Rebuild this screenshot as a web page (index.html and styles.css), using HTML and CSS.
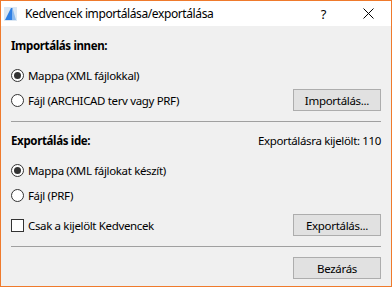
FILE: index.html
```html
<!DOCTYPE html>
<html lang="hu">
<head>
    <meta charset="UTF-8">
    <title>Kedvencek importálása/exportálása</title>
    <link rel="stylesheet" href="styles.css">
</head>
<body>
    <div class="window">
        <!-- Címsor -->
        <div class="titlebar">
            <svg class="app-icon" width="13" height="14" viewBox="0 0 13 14">
                <rect x="0" y="0" width="13" height="14" fill="#dbe7f3"/>
                <path d="M1 13 L7 1 L8.5 1 L8.5 13 Z" fill="#2f80e4"/>
                <path d="M8.5 1 L12 13 L8.5 13 Z" fill="#8dbcef"/>
            </svg>
            <span class="title">Kedvencek importálása/exportálása</span>
            <span class="help">?</span>
            <svg class="close" width="11" height="11" viewBox="0 0 11 11">
                <path d="M0.5 0.5 L10.5 10.5 M10.5 0.5 L0.5 10.5" stroke="#000" stroke-width="1"/>
            </svg>
        </div>

        <div class="content">
            <!-- Import -->
            <div class="heading">Importálás innen:</div>
            <div class="row row-first">
                <label class="option"><span class="radio checked"></span>Mappa (XML fájlokkal)</label>
            </div>
            <div class="row row-tight">
                <label class="option"><span class="radio"></span>Fájl (ARCHICAD terv vagy PRF)</label>
                <button class="btn">Importálás...</button>
            </div>

            <div class="separator"></div>

            <!-- Export -->
            <div class="heading heading-split">
                <span>Exportálás ide:</span>
                <span class="count">Exportálásra kijelölt: 110</span>
            </div>
            <div class="row row-first">
                <label class="option"><span class="radio checked"></span>Mappa (XML fájlokat készít)</label>
            </div>
            <div class="row row-tight">
                <label class="option"><span class="radio"></span>Fájl (PRF)</label>
            </div>
            <div class="row row-check">
                <label class="option"><span class="checkbox"></span>Csak a kijelölt Kedvencek</label>
                <button class="btn">Exportálás...</button>
            </div>

            <div class="separator"></div>

            <div class="row row-close">
                <button class="btn">Bezárás</button>
            </div>
        </div>
    </div>
</body>
</html>
```

FILE: styles.css
```css
* {
    margin: 0;
    padding: 0;
    box-sizing: border-box;
}

body {
    font-family: "Noto Sans", "Open Sans", sans-serif;
    font-size: 11.5px;
    letter-spacing: -0.35px;
    color: #000;
    background-color: #f0f0f0;
}

.window {
    width: 392px;
    height: 287px;
    border: 1px solid #ef7a2c;
    background-color: #f0f0f0;
    display: flex;
    flex-direction: column;
}

/* Címsor */
.titlebar {
    height: 25px;
    flex: none;
    background-color: #fff;
    display: flex;
    align-items: center;
    padding-left: 3px;
}

.app-icon {
    flex: none;
}

.title {
    margin-left: 8px;
    font-size: 12px;
    letter-spacing: -0.4px;
    flex: 1;
}

.help {
    font-size: 13px;
    margin-right: 37px;
}

.close {
    margin-right: 17px;
}

/* Tartalom */
.content {
    padding: 12px 10px 0 10px;
    display: flex;
    flex-direction: column;
}

.content > * {
    flex: none;
}

.heading {
    font-weight: bold;
    line-height: 16px;
    height: 16px;
}

.heading-split {
    display: flex;
    justify-content: space-between;
    margin-top: 1px;
}

.count {
    font-weight: normal;
}

.row {
    height: 22px;
    display: flex;
    align-items: center;
    justify-content: space-between;
}

.row-first {
    margin-top: 10px;
}

.row-tight {
    margin-top: 3px;
}

.row-check {
    margin-top: 8px;
}

.row-close {
    justify-content: flex-end;
}

.option {
    display: flex;
    align-items: center;
    gap: 4px;
}

.radio {
    width: 13px;
    height: 13px;
    border: 1px solid #333;
    border-radius: 50%;
    background-color: #fff;
    display: flex;
    align-items: center;
    justify-content: center;
}

.radio.checked::after {
    content: "";
    width: 7px;
    height: 7px;
    border-radius: 50%;
    background-color: #333;
}

.checkbox {
    width: 13px;
    height: 13px;
    border: 1px solid #333;
    background-color: #fff;
}

.separator {
    height: 1px;
    background-color: #a0a0a0;
    margin: 10px 0;
}

.btn {
    width: 88px;
    height: 22px;
    background-color: #e1e1e1;
    border: 1px solid #adadad;
    font-family: inherit;
    font-size: 11.5px;
    letter-spacing: -0.3px;
    color: #000;
}
```
